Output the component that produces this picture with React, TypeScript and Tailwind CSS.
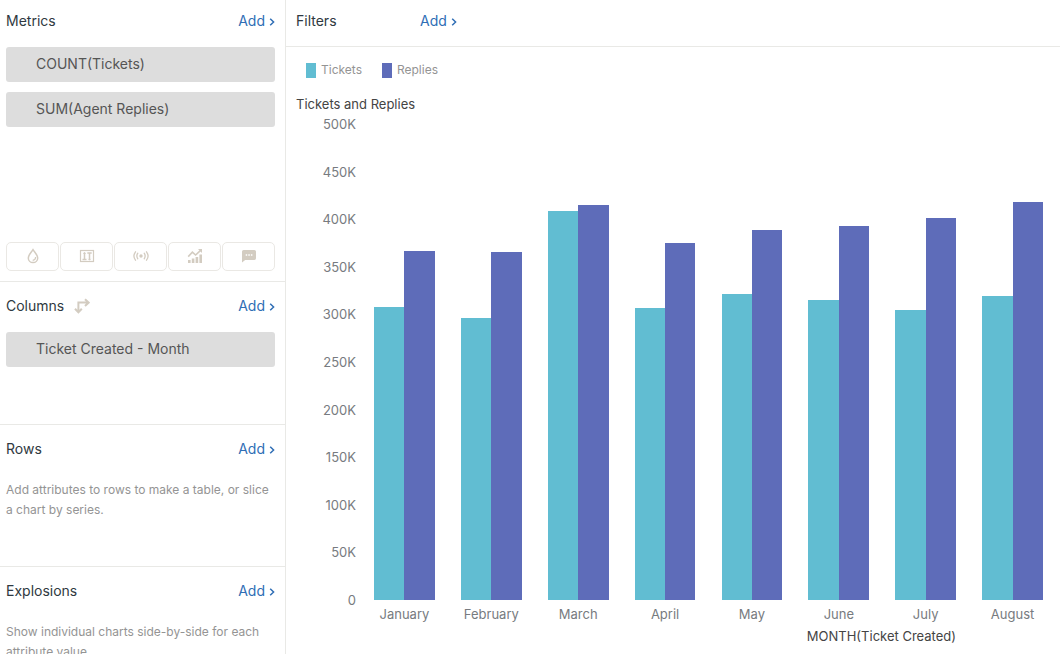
import type { ReactNode } from "react";

type Month = { name: string; tickets: number; replies: number };

const MAX = 500;
const ticks = ["500K", "450K", "400K", "350K", "300K", "250K", "200K", "150K", "100K", "50K", "0"];
const months: Month[] = [
  { name: "January", tickets: 308.1, replies: 367 },
  { name: "February", tickets: 296.5, replies: 365.4 },
  { name: "March", tickets: 409, replies: 415.4 },
  { name: "April", tickets: 306.5, replies: 375.4 },
  { name: "May", tickets: 321.2, replies: 388.4 },
  { name: "June", tickets: 315.5, replies: 393.3 },
  { name: "July", tickets: 304.4, replies: 401.2 },
  { name: "August", tickets: 319.1, replies: 418.5 },
];

function AddButton({ label }: { label: string }) {
  return (
    <button type="button" aria-label={`Add ${label}`} className="flex items-center gap-1 text-sm leading-6 text-[#2f6eb5]">
      Add
      <svg width="6" height="10" viewBox="0 0 6 10" fill="none" stroke="currentColor" strokeWidth="1.5" className="mt-0.5">
        <path d="M1.200 1.700 4.600 5 1.200 8.300" />
      </svg>
    </button>
  );
}

function Header({ title, first, icon }: { title: string; first?: boolean; icon?: ReactNode }) {
  return (
    <div className={`flex items-center justify-between pb-3.5 ${first ? "pt-[9px]" : "pt-3"}`}>
      <h2 className="flex items-center gap-2.5 text-sm leading-6 text-[#2f3941]">
        {title}
        {icon}
      </h2>
      <AddButton label={title} />
    </div>
  );
}

function Chip({ children }: { children: ReactNode }) {
  return (
    <button type="button" className="block h-[35px] w-full rounded-[3px] bg-[#dddddd] pb-0.5 pl-[30px] text-left text-sm text-[#555555]">
      {children}
    </button>
  );
}

const DropIcon = () => (
  <svg width="14" height="16" viewBox="0 0 14 16" fill="none" stroke="currentColor">
    <path d="M7 1.600C5.400 4.200 2.300 7 2.300 9.900a4.700 4.700 0 0 0 9.400 0C11.700 7 8.600 4.200 7 1.600Z" strokeWidth="1.500" />
    <path d="M9.600 9a3.400 3.400 0 0 1-2.900 3.400" strokeWidth="1.200" />
  </svg>
);

const RangeIcon = () => (
  <svg width="16" height="16" viewBox="0 0 16 16" fill="none" stroke="currentColor">
    <rect x="1.500" y="2.500" width="13" height="11" strokeWidth="1.200" />
    <path d="M5.500 4.500v7M3.500 11.500h4M10.500 5v7M8.300 5h4.400" strokeWidth="1.500" />
    <path d="M4.200 6 5.500 4.300 6.800 6M9.300 10.800l1.200 1.500 1.200-1.500" strokeWidth="0.700" />
  </svg>
);

const BroadcastIcon = () => (
  <svg width="16" height="16" viewBox="0 0 16 16" fill="none" stroke="currentColor" strokeLinecap="round">
    <circle cx="8" cy="8" r="1.700" fill="currentColor" stroke="none" />
    <path d="M4.800 5.200a5 5 0 0 0 0 5.600M11.200 5.200a5 5 0 0 1 0 5.600M2.500 3.800a7 7 0 0 0 0 8.400M13.500 3.800a7 7 0 0 1 0 8.400" strokeWidth="1.300" />
  </svg>
);

const TrendIcon = () => (
  <svg width="16" height="16" viewBox="0 0 16 16" fill="currentColor">
    <path d="M1 12h2.600v3H1zM4.800 10.400h2.600V15H4.800zM8.600 9h2.600v6H8.600zM12.400 6.500H15V15h-2.600z" />
    <path d="M1.200 8.600 5.400 4.200l3.200 2.800 5-4.600" fill="none" stroke="currentColor" strokeWidth="1.600" />
    <path d="M11 1h4v4z" />
  </svg>
);

const CommentIcon = () => (
  <svg width="16" height="16" viewBox="0 0 16 16">
    <path d="M2.600 2h10.800A1.600 1.600 0 0 1 15 3.600v6.700a1.600 1.600 0 0 1-1.600 1.600H4.200L1 14.600V3.600A1.600 1.600 0 0 1 2.600 2Z" fill="currentColor" />
    <path d="M4.700 6.300h1.500v1.500H4.700zM7.300 6.300h1.500v1.500H7.300zM9.900 6.300h1.500v1.500H9.900z" fill="#fff" />
  </svg>
);

const PivotIcon = () => (
  <svg width="16" height="16" viewBox="0 0 16 16" fill="none" stroke="currentColor" strokeWidth="2" className="text-[#d3ccc1]">
    <path d="M4.400 14V4.600h10M11 1.200l3.600 3.400L11 8M1 10.800l3.400 3.600 3.400-3.600" />
  </svg>
);

const tools = [
  { label: "Color", Icon: DropIcon },
  { label: "Range", Icon: RangeIcon },
  { label: "Broadcast", Icon: BroadcastIcon },
  { label: "Trend", Icon: TrendIcon },
  { label: "Comment", Icon: CommentIcon },
];

function Sidebar() {
  const section = "border-b border-[#e9e9e6] pl-1.5 pr-2.5";
  return (
    <aside className="w-[286px] shrink-0 border-r border-[#e9e9e6]">
      <section className={section}>
        <Header title="Metrics" first />
        <div className="flex min-h-[195px] flex-col gap-2.5">
          <Chip>COUNT(Tickets)</Chip>
          <Chip>SUM(Agent Replies)</Chip>
        </div>
        <div className="flex gap-px pb-2.5">
          {tools.map(({ label, Icon }) => (
            <button
              key={label}
              type="button"
              aria-label={label}
              className="flex h-[29px] flex-1 items-center justify-center rounded-[5px] border border-[#eae8e4] pb-0.5 text-[#d3ccc1]"
            >
              <Icon />
            </button>
          ))}
        </div>
      </section>
      <section className={section}>
        <Header title="Columns" icon={<PivotIcon />} />
        <div className="min-h-[92px]">
          <Chip>Ticket Created - Month</Chip>
        </div>
      </section>
      <section className={section}>
        <Header title="Rows" />
        <p className="min-h-[91px] pt-[5px] text-xs leading-5 text-[#949494]">
          Add attributes to rows to make a table, or slice a chart by series.
        </p>
      </section>
      <section className="pl-1.5 pr-2.5">
        <Header title="Explosions" />
        <p className="pt-[5px] text-xs leading-5 text-[#949494]">
          Show individual charts side-by-side for each attribute value.
        </p>
      </section>
    </aside>
  );
}

function Chart() {
  return (
    <figure className="pr-1">
      <ul className="flex gap-5 pl-5 pt-[13px] text-xs leading-5 text-[#949494]">
        <li className="flex items-center gap-[5px]">
          <span className="h-[15px] w-2.5 bg-[#61bdd2]" />
          Tickets
        </li>
        <li className="flex items-center gap-[5px]">
          <span className="h-[15px] w-2.5 bg-[#5e6cb9]" />
          Replies
        </li>
      </ul>
      <figcaption className="pl-2.5 pt-3.5 text-[13px] leading-5 text-[#444444]">Tickets and Replies</figcaption>
      <div className="flex pt-2.5">
        <ol className="-my-2.5 flex h-[496px] w-[70px] flex-col justify-between text-right text-[13px] leading-5 text-[#777b80]">
          {ticks.map((t) => (
            <li key={t}>{t}</li>
          ))}
        </ol>
        <div className="ml-[5px] flex flex-1">
          {months.map((m) => (
            <div key={m.name} className="flex-1 text-center text-[13px] leading-5 text-[#777b80]">
              <div className="mx-[15%] flex h-[476px] items-end">
                <div className="flex-1 bg-[#61bdd2]" style={{ height: `${(m.tickets / MAX) * 100}%` }} />
                <div className="flex-1 bg-[#5e6cb9]" style={{ height: `${(m.replies / MAX) * 100}%` }} />
              </div>
              <div className="pt-1">{m.name}</div>
            </div>
          ))}
        </div>
      </div>
      <p className="pr-[100px] pt-0.5 text-right text-[13px] leading-5 text-[#444444]">MONTH(Ticket Created)</p>
    </figure>
  );
}

export default function App() {
  return (
    <div className="flex h-screen overflow-hidden bg-white font-['Inter','Liberation_Sans',sans-serif]">
      <Sidebar />
      <main className="min-w-0 flex-1">
        <div className="flex border-b border-[#e9e9e6] pb-[13px] pl-2.5 pt-[9px]">
          <h2 className="w-[124px] text-sm leading-6 text-[#2f3941]">Filters</h2>
          <AddButton label="Filters" />
        </div>
        <Chart />
      </main>
    </div>
  );
}
